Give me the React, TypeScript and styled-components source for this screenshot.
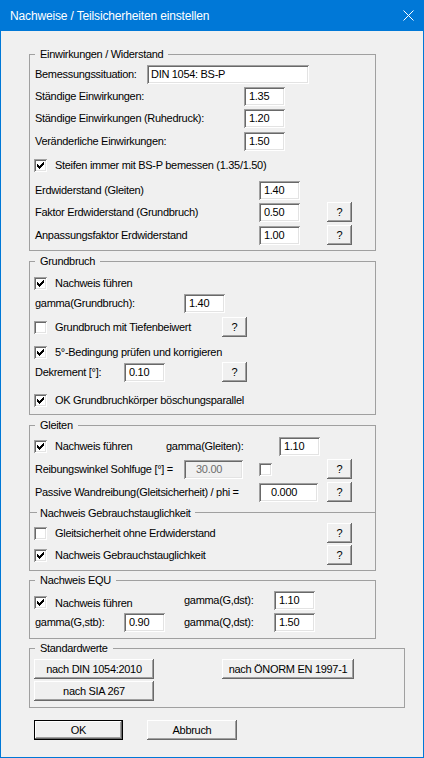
import React from 'react';
import styled, { createGlobalStyle } from 'styled-components';

const GlobalStyle = createGlobalStyle`
  html, body {
    margin: 0;
    padding: 0;
    background: #f0f0f0;
  }
  body {
    font-family: "Liberation Sans", Arial, sans-serif;
  }
`;

const Window = styled.div`
  box-sizing: border-box;
  width: 424px;
  height: 758px;
  border: 1px solid #0078d7;
  border-top: none;
  background: #f0f0f0;
  display: flex;
  flex-direction: column;
  overflow: hidden;
`;

const TitleBar = styled.div`
  flex: none;
  height: 31px;
  background: #0078d7;
  color: #fff;
  display: flex;
  align-items: center;
  justify-content: space-between;
  padding: 0 9px 0 9px;
  font-size: 12px;
  letter-spacing: -0.15px;
`;

const Body = styled.div`
  display: flex;
  flex-direction: column;
  align-items: flex-start;
  padding: 16px 0 0 28px;
  font-size: 11px;
  letter-spacing: -0.3px;
  color: #000;
`;

const Group = styled.fieldset<{ $w: number; $pt: number; $pb: number; $mb?: number }>`
  box-sizing: border-box;
  width: ${p => p.$w}px;
  min-width: 0;
  margin: 0 0 ${p => p.$mb ?? 0}px 0;
  padding: ${p => p.$pt}px 4px ${p => p.$pb}px 5px;
  border: 1px solid #a0a0a0;
`;

const Legend = styled.legend`
  padding: 0 5px;
  height: 15px;
  line-height: 15px;
`;

const Row = styled.div<{ $mt?: number }>`
  display: flex;
  align-items: center;
  height: 20px;
  margin-top: ${p => p.$mt ?? 0}px;
`;

const Label = styled.span<{ $w?: number; $ml?: number }>`
  flex: none;
  width: ${p => (p.$w ? `${p.$w}px` : 'auto')};
  margin-left: ${p => p.$ml ?? 0}px;
  white-space: nowrap;
`;

const Field = styled.div<{ $w: number; $indent?: number; $disabled?: boolean }>`
  box-sizing: border-box;
  flex: none;
  width: ${p => p.$w}px;
  height: 19px;
  line-height: 19px;
  padding-left: ${p => p.$indent ?? 5}px;
  background: ${p => (p.$disabled ? '#f0f0f0' : '#fff')};
  color: ${p => (p.$disabled ? '#6d6d6d' : '#000')};
  box-shadow: inset 1px 1px #a0a0a0, inset -1px -1px #fff, inset 2px 2px #696969,
    inset -2px -2px #e3e3e3;
  white-space: nowrap;
`;

const Box = styled.span<{ $ml?: number }>`
  flex: none;
  box-sizing: border-box;
  width: 13px;
  height: 13px;
  margin-left: ${p => p.$ml ?? 0}px;
  background: #fff;
  box-shadow: inset 1px 1px #a0a0a0, inset -1px -1px #fff, inset 2px 2px #696969,
    inset -2px -2px #e3e3e3;
  display: flex;

  svg {
    display: block;
  }
`;

const CheckItem = styled.label<{ $w?: number; $dy?: number }>`
  flex: none;
  display: flex;
  align-items: center;
  gap: 8px;
  margin-left: -1px;
  margin-top: ${p => p.$dy ?? 0}px;
  width: ${p => (p.$w ? `${p.$w}px` : 'auto')};
  white-space: nowrap;
`;

const Push = styled.button<{ $w: number; $ml?: number; $default?: boolean }>`
  flex: none;
  box-sizing: border-box;
  width: ${p => p.$w}px;
  height: 20px;
  margin: 0 0 0 ${p => p.$ml ?? 0}px;
  padding: 0;
  border: none;
  background: #f0f0f0;
  font: inherit;
  letter-spacing: inherit;
  color: #000;
  box-shadow: ${p =>
    p.$default
      ? 'inset 0 0 0 1px #000, inset -2px -2px #696969, inset 2px 2px #fff, inset -3px -3px #a0a0a0'
      : 'inset -1px -1px #696969, inset 1px 1px #fff, inset -2px -2px #a0a0a0, inset 2px 2px #f0f0f0'};
`;

const SubHead = styled.div`
  display: flex;
  align-items: center;
  height: 15px;
  margin: 3px -4px 0 -5px;

  &::before {
    content: '';
    width: 7px;
    height: 1px;
    background: #a0a0a0;
  }

  &::after {
    content: '';
    flex: 1;
    height: 1px;
    background: #a0a0a0;
  }

  span {
    padding: 0 4px 0 3px;
  }
`;

const Footer = styled.div`
  display: flex;
  margin-top: 12px;
  padding-left: 5px;
`;

const Tick = () => (
  <svg width="13" height="13" viewBox="0 0 13 13" shapeRendering="crispEdges">
    <rect x="3" y="5" width="1" height="3" />
    <rect x="4" y="6" width="1" height="3" />
    <rect x="5" y="7" width="1" height="3" />
    <rect x="6" y="6" width="1" height="3" />
    <rect x="7" y="5" width="1" height="3" />
    <rect x="8" y="4" width="1" height="3" />
    <rect x="9" y="3" width="1" height="3" />
  </svg>
);

const Check = ({ on, ml }: { on?: boolean; ml?: number }) => <Box $ml={ml}>{on && <Tick />}</Box>;

const Help = ({ ml }: { ml?: number }) => (
  <Push $w={25} $ml={ml}>
    ?
  </Push>
);

export default function App() {
  return (
    <Window>
      <GlobalStyle />
      <TitleBar>
        <span>Nachweise / Teilsicherheiten einstellen</span>
        <svg width="11" height="11" viewBox="0 0 11 11">
          <path d="M0.5 0.5L10.5 10.5M10.5 0.5L0.5 10.5" stroke="#fff" strokeWidth="1" />
        </svg>
      </TitleBar>

      <Body>
        <Group $w={347} $pt={2} $pb={5} $mb={3}>
          <Legend>Einwirkungen / Widerstand</Legend>
          <Row>
            <Label $w={112}>Bemessungssituation:</Label>
            <Field $w={162} $indent={4}>DIN 1054: BS-P</Field>
          </Row>
          <Row $mt={2}>
            <Label $w={209}>Ständige Einwirkungen:</Label>
            <Field $w={41}>1.35</Field>
          </Row>
          <Row $mt={2}>
            <Label $w={209}>Ständige Einwirkungen (Ruhedruck):</Label>
            <Field $w={41}>1.20</Field>
          </Row>
          <Row $mt={3}>
            <Label $w={209}>Veränderliche Einwirkungen:</Label>
            <Field $w={41}>1.50</Field>
          </Row>
          <Row $mt={4}>
            <CheckItem>
              <Check on />
              Steifen immer mit BS-P bemessen (1.35/1.50)
            </CheckItem>
          </Row>
          <Row $mt={5}>
            <Label $w={224}>Erdwiderstand (Gleiten)</Label>
            <Field $w={41}>1.40</Field>
          </Row>
          <Row $mt={2}>
            <Label $w={224}>Faktor Erdwiderstand (Grundbruch)</Label>
            <Field $w={41}>0.50</Field>
            <Help ml={27} />
          </Row>
          <Row $mt={3}>
            <Label $w={224}>Anpassungsfaktor Erdwiderstand</Label>
            <Field $w={41}>1.00</Field>
            <Help ml={27} />
          </Row>
        </Group>

        <Group $w={347} $pt={4} $pb={4} $mb={3}>
          <Legend>Grundbruch</Legend>
          <Row>
            <CheckItem>
              <Check on />
              Nachweis führen
            </CheckItem>
          </Row>
          <Row>
            <Label $w={149}>gamma(Grundbruch):</Label>
            <Field $w={41}>1.40</Field>
          </Row>
          <Row $mt={4}>
            <CheckItem $w={188}>
              <Check />
              Grundbruch mit Tiefenbeiwert
            </CheckItem>
            <Help />
          </Row>
          <Row $mt={5}>
            <CheckItem>
              <Check on />
              5°-Bedingung prüfen und korrigieren
            </CheckItem>
          </Row>
          <Row>
            <Label $w={89}>Dekrement [°]:</Label>
            <Field $w={41}>0.10</Field>
            <Help ml={57} />
          </Row>
          <Row $mt={8}>
            <CheckItem>
              <Check on />
              OK Grundbruchkörper böschungsparallel
            </CheckItem>
          </Row>
        </Group>

        <Group $w={347} $pt={3} $pb={5} $mb={2}>
          <Legend>Gleiten</Legend>
          <Row>
            <CheckItem $w={132}>
              <Check on />
              Nachweis führen
            </CheckItem>
            <Label $w={113}>gamma(Gleiten):</Label>
            <Field $w={41}>1.10</Field>
          </Row>
          <Row $mt={3}>
            <Label $w={149}>Reibungswinkel Sohlfuge [°] =</Label>
            <Field $w={59} $indent={12} $disabled>
              30.00
            </Field>
            <Check ml={16} />
            <Help ml={55} />
          </Row>
          <Row $mt={3}>
            <Label $w={224}>Passive Wandreibung(Gleitsicherheit) / phi =</Label>
            <Field $w={59} $indent={12}>
              0.000
            </Field>
            <Help ml={9} />
          </Row>
          <SubHead>
            <span>Nachweis Gebrauchstauglichkeit</span>
          </SubHead>
          <Row $mt={3}>
            <CheckItem $w={293}>
              <Check />
              Gleitsicherheit ohne Erdwiderstand
            </CheckItem>
            <Help />
          </Row>
          <Row $mt={2}>
            <CheckItem $w={293}>
              <Check on />
              Nachweis Gebrauchstauglichkeit
            </CheckItem>
            <Help />
          </Row>
        </Group>

        <Group $w={347} $pt={2} $pb={6} $mb={2}>
          <Legend>Nachweis EQU</Legend>
          <Row>
            <CheckItem $w={150} $dy={5}>
              <Check on />
              Nachweis führen
            </CheckItem>
            <Label $w={90}>gamma(G,dst):</Label>
            <Field $w={41}>1.10</Field>
          </Row>
          <Row $mt={2}>
            <Label $w={89}>gamma(G,stb):</Label>
            <Field $w={41}>0.90</Field>
            <Label $w={90} $ml={19}>
              gamma(Q,dst):
            </Label>
            <Field $w={41}>1.50</Field>
          </Row>
        </Group>

        <Group $w={376} $pt={3} $pb={6}>
          <Legend>Standardwerte</Legend>
          <Row>
            <Push $w={120} $ml={-1}>
              nach DIN 1054:2010
            </Push>
            <Push $w={132} $ml={68}>
              nach ÖNORM EN 1997-1
            </Push>
          </Row>
          <Row $mt={2}>
            <Push $w={120} $ml={-1}>
              nach SIA 267
            </Push>
          </Row>
        </Group>

        <Footer>
          <Push $w={89} $default>
            OK
          </Push>
          <Push $w={90} $ml={24}>
            Abbruch
          </Push>
        </Footer>
      </Body>
    </Window>
  );
}
